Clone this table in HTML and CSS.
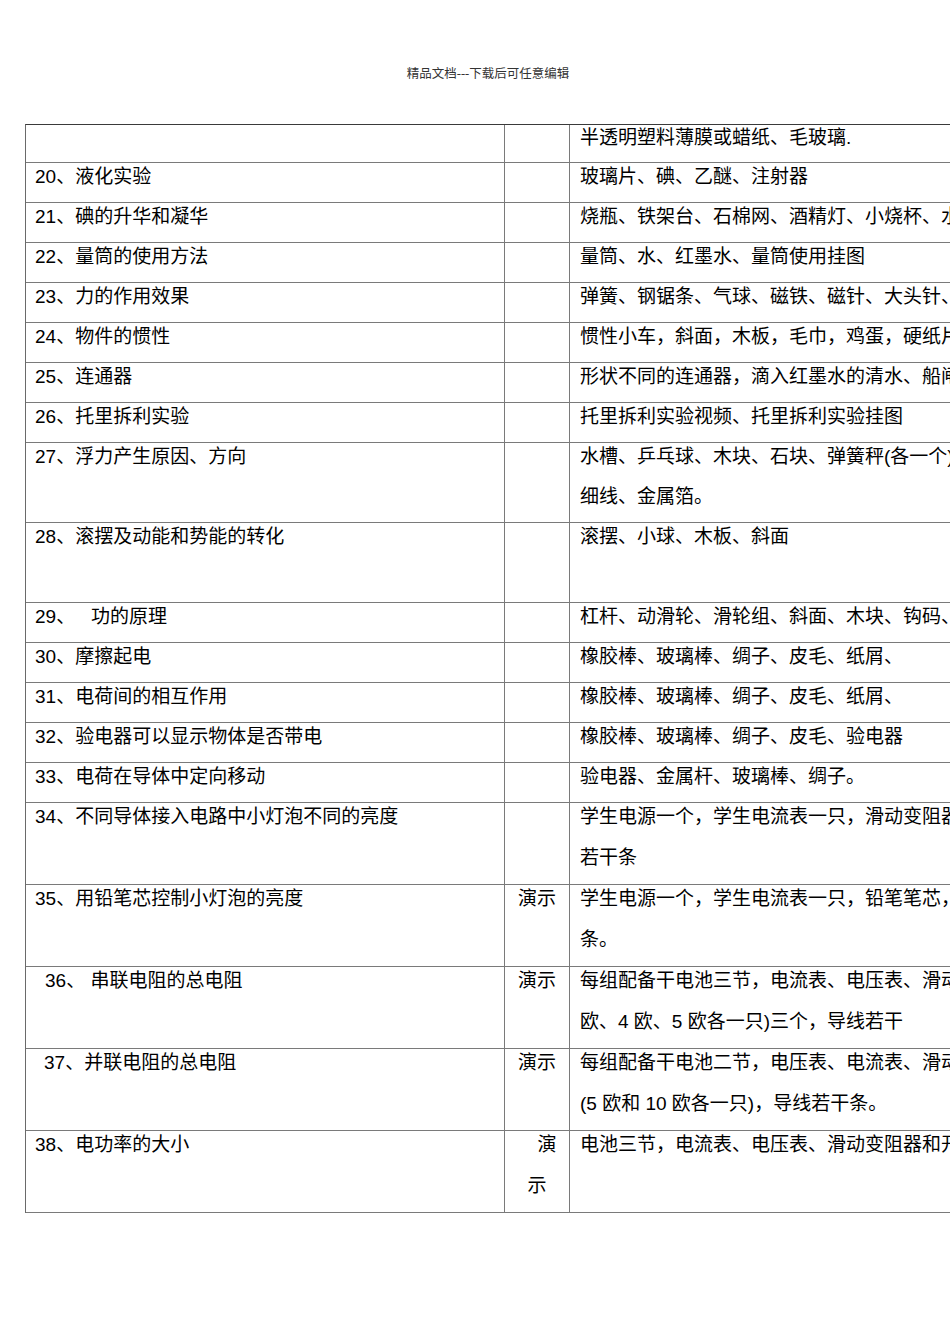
FILE: index.html
```html
<!DOCTYPE html>
<html lang="zh">
<head>
<meta charset="utf-8">
<title>精品文档</title>
<link rel="stylesheet" href="styles.css">
</head>
<body>
<div class="page">
  <div class="header">精品文档---下载后可任意编辑</div>
  <div class="grid">
    <div class="c c1 first"><div class="ln"></div></div>
    <div class="c c2 first"><div class="ln"></div></div>
    <div class="c c3 first"><div class="ln">半透明塑料薄膜或蜡纸、毛玻璃.</div></div>

    <div class="c c1"><div class="ln">20、液化实验</div></div>
    <div class="c c2"><div class="ln"></div></div>
    <div class="c c3"><div class="ln">玻璃片、碘、乙醚、注射器</div></div>

    <div class="c c1"><div class="ln">21、碘的升华和凝华</div></div>
    <div class="c c2"><div class="ln"></div></div>
    <div class="c c3"><div class="ln">烧瓶、铁架台、石棉网、酒精灯、小烧杯、水</div></div>

    <div class="c c1"><div class="ln">22、量筒的使用方法</div></div>
    <div class="c c2"><div class="ln"></div></div>
    <div class="c c3"><div class="ln">量筒、水、红墨水、量筒使用挂图</div></div>

    <div class="c c1"><div class="ln">23、力的作用效果</div></div>
    <div class="c c2"><div class="ln"></div></div>
    <div class="c c3"><div class="ln">弹簧、钢锯条、气球、磁铁、磁针、大头针、</div></div>

    <div class="c c1"><div class="ln">24、物件的惯性</div></div>
    <div class="c c2"><div class="ln"></div></div>
    <div class="c c3"><div class="ln">惯性小车，斜面，木板，毛巾，鸡蛋，硬纸片</div></div>

    <div class="c c1"><div class="ln">25、连通器</div></div>
    <div class="c c2"><div class="ln"></div></div>
    <div class="c c3"><div class="ln">形状不同的连通器，滴入红墨水的清水、船闸</div></div>

    <div class="c c1"><div class="ln">26、托里拆利实验</div></div>
    <div class="c c2"><div class="ln"></div></div>
    <div class="c c3"><div class="ln">托里拆利实验视频、托里拆利实验挂图</div></div>

    <div class="c c1"><div class="ln">27、浮力产生原因、方向</div><div class="ln"></div></div>
    <div class="c c2"><div class="ln"></div><div class="ln"></div></div>
    <div class="c c3"><div class="ln">水槽、乒乓球、木块、石块、弹簧秤(各一个)</div><div class="ln">细线、金属箔。</div></div>

    <div class="c c1"><div class="ln">28、滚摆及动能和势能的转化</div><div class="ln"></div></div>
    <div class="c c2"><div class="ln"></div><div class="ln"></div></div>
    <div class="c c3"><div class="ln">滚摆、小球、木板、斜面</div><div class="ln"></div></div>

    <div class="c c1"><div class="ln">29、   功的原理</div></div>
    <div class="c c2"><div class="ln"></div></div>
    <div class="c c3"><div class="ln">杠杆、动滑轮、滑轮组、斜面、木块、钩码、</div></div>

    <div class="c c1"><div class="ln">30、摩擦起电</div></div>
    <div class="c c2"><div class="ln"></div></div>
    <div class="c c3"><div class="ln">橡胶棒、玻璃棒、绸子、皮毛、纸屑、</div></div>

    <div class="c c1"><div class="ln">31、电荷间的相互作用</div></div>
    <div class="c c2"><div class="ln"></div></div>
    <div class="c c3"><div class="ln">橡胶棒、玻璃棒、绸子、皮毛、纸屑、</div></div>

    <div class="c c1"><div class="ln">32、验电器可以显示物体是否带电</div></div>
    <div class="c c2"><div class="ln"></div></div>
    <div class="c c3"><div class="ln">橡胶棒、玻璃棒、绸子、皮毛、验电器</div></div>

    <div class="c c1"><div class="ln">33、电荷在导体中定向移动</div></div>
    <div class="c c2"><div class="ln"></div></div>
    <div class="c c3"><div class="ln">验电器、金属杆、玻璃棒、绸子。</div></div>

    <div class="c c1 tall"><div class="ln">34、不同导体接入电路中小灯泡不同的亮度</div><div class="ln"></div></div>
    <div class="c c2 tall"><div class="ln"></div><div class="ln"></div></div>
    <div class="c c3 tall"><div class="ln">学生电源一个，学生电流表一只，滑动变阻器</div><div class="ln">若干条</div></div>

    <div class="c c1 tall"><div class="ln">35、用铅笔芯控制小灯泡的亮度</div><div class="ln"></div></div>
    <div class="c c2 tall"><div class="ln ctr">演示</div><div class="ln"></div></div>
    <div class="c c3 tall"><div class="ln">学生电源一个，学生电流表一只，铅笔笔芯，导线</div><div class="ln">条。</div></div>

    <div class="c c1 tall"><div class="ln ind">36、 串联电阻的总电阻</div><div class="ln"></div></div>
    <div class="c c2 tall"><div class="ln ctr">演示</div><div class="ln"></div></div>
    <div class="c c3 tall"><div class="ln">每组配备干电池三节，电流表、电压表、滑动变阻</div><div class="ln">欧、4 欧、5 欧各一只)三个，导线若干</div></div>

    <div class="c c1 tall"><div class="ln ind2">37、并联电阻的总电阻</div><div class="ln"></div></div>
    <div class="c c2 tall"><div class="ln ctr">演示</div><div class="ln"></div></div>
    <div class="c c3 tall"><div class="ln">每组配备干电池二节，电压表、电流表、滑动变阻</div><div class="ln">(5 欧和 10 欧各一只)，导线若干条。</div></div>

    <div class="c c1 tall"><div class="ln">38、电功率的大小</div><div class="ln"></div></div>
    <div class="c c2 tall"><div class="ln ctr shift">演</div><div class="ln ctr">示</div></div>
    <div class="c c3 tall"><div class="ln">电池三节，电流表、电压表、滑动变阻器和开关</div><div class="ln"></div></div>
  </div>
</div>
</body>
</html>
```

FILE: styles.css
```css
html, body {
  margin: 0;
  padding: 0;
  overflow: hidden;
  background: #ffffff;
}

.page {
  width: 1200px;
  font-family: "Liberation Sans", "Noto Sans CJK SC", sans-serif;
  color: #000000;
}

.header {
  width: 924px;
  padding-left: 26px;
  padding-top: 64px;
  height: 20px;
  line-height: 20px;
  text-align: center;
  font-size: 12.5px;
  color: #333333;
  font-family: "Liberation Serif", "Noto Sans CJK SC", serif;
  margin-bottom: 40px;
}

.grid {
  margin-left: 25px;
  display: grid;
  grid-template-columns: 479px 65px 640px;
  width: max-content;
  border-left: 1px solid #6a6a6a;
  border-top: 1px solid #3a3a3a;
}

.c {
  box-sizing: border-box;
  border-right: 1px solid #7a7a7a;
  border-bottom: 1px solid #7a7a7a;
  font-size: 19px;
  white-space: pre;
  overflow: hidden;
}

.c1 { padding-left: 9px; }
.c2 { padding: 0; }
.c3 { padding-left: 10px; }

.ln {
  height: 40px;
  line-height: 27px;
}

.ln:last-child { height: 39px; }

.first .ln { height: 37px; line-height: 26px; }

.tall .ln { height: 41px; }
.tall .ln:last-child { height: 40px; }

.ctr { text-align: center; }
.shift { padding-left: 20px; }

.ind { padding-left: 10px; }
.ind2 { padding-left: 9px; }
```
